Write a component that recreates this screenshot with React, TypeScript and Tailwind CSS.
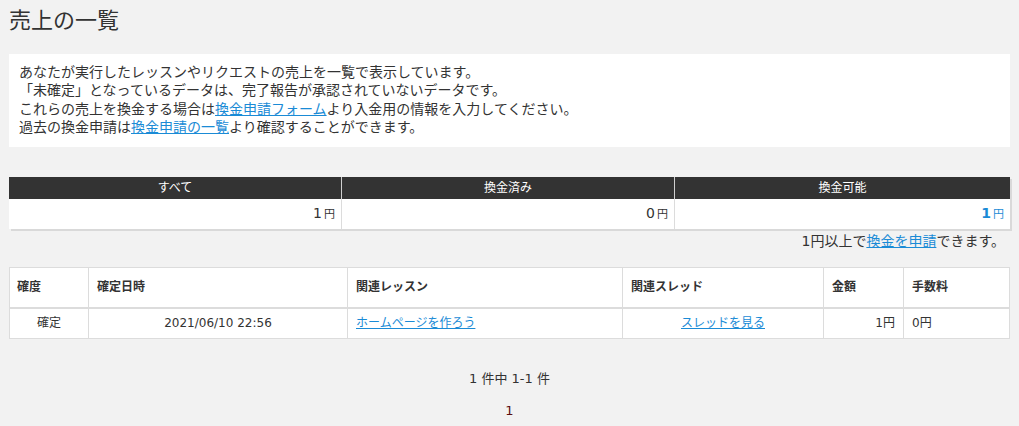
export default function App() {
  const font = { fontFamily: '"DejaVu Sans", "Noto Sans CJK JP", "Noto Sans", sans-serif' };
  return (
    <div className="min-h-[426px] bg-[#f2f2f2] px-[9px] pt-[6px] pb-4 text-[#333]" style={font}>
      <h1 className="text-[22px] leading-[30px] font-normal">売上の一覧</h1>

      {/* Info box */}
      <div className="mt-[18px] bg-white px-[10px] pt-[9px] pb-[11px] text-[14px] leading-[18.3px] text-[#333]">
        <p>あなたが実行したレッスンやリクエストの売上を一覧で表示しています。</p>
        <p>「未確定」となっているデータは、完了報告が承認されていないデータです。</p>
        <p>
          これらの売上を換金する場合は
          <a href="#" className="text-[#1a8bd6] underline">換金申請フォーム</a>
          より入金用の情報を入力してください。
        </p>
        <p>
          過去の換金申請は
          <a href="#" className="text-[#1a8bd6] underline">換金申請の一覧</a>
          より確認することができます。
        </p>
      </div>

      {/* Summary */}
      <div className="mt-[30px] bg-white shadow-[2px_2px_0_#d9d9d9]">
        <div className="grid grid-cols-[332px_333px_1fr] bg-[#333] text-[12px] leading-[22px] text-white">
          <div className="text-center">すべて</div>
          <div className="border-l border-[#cfcfcf] text-center">換金済み</div>
          <div className="border-l border-[#cfcfcf] text-center">換金可能</div>
        </div>
        <div className="grid grid-cols-[332px_333px_1fr] text-[14px] leading-[29px]">
          <div className="pr-[6px] text-right">1<span className="ml-[2px] text-[11px]">円</span></div>
          <div className="border-l border-[#dcdcdc] pr-[6px] text-right">0<span className="ml-[2px] text-[11px]">円</span></div>
          <div className="border-l border-[#dcdcdc] pr-[6px] text-right font-bold text-[#1a8bd6]">1<span className="ml-[2px] text-[11px] font-normal">円</span></div>
        </div>
      </div>
      <p className="mt-[3px] pr-[5px] text-right text-[14px] leading-[18px]">
        1円以上で<a href="#" className="text-[#1a8bd6] underline">換金を申請</a>できます。
      </p>

      {/* Table */}
      <table className="mt-[17px] w-full border-collapse bg-white text-[12px]">
        <thead>
          <tr className="h-[40px] border-b-2 border-[#dcdcdc] text-left font-bold">
            <th className="w-[79px] border border-[#dcdcdc] px-[7px] font-bold">確度</th>
            <th className="w-[259px] border border-[#dcdcdc] px-[8px] font-bold">確定日時</th>
            <th className="w-[275px] border border-[#dcdcdc] px-[8px] font-bold">関連レッスン</th>
            <th className="w-[201px] border border-[#dcdcdc] px-[8px] font-bold">関連スレッド</th>
            <th className="w-[80px] border border-[#dcdcdc] px-[8px] font-bold">金額</th>
            <th className="border border-[#dcdcdc] px-[8px] font-bold">手数料</th>
          </tr>
        </thead>
        <tbody>
          <tr className="h-[31px]">
            <td className="border border-[#dcdcdc] px-[7px] text-center">確定</td>
            <td className="border border-[#dcdcdc] px-[8px] text-center">2021/06/10 22:56</td>
            <td className="border border-[#dcdcdc] px-[8px]">
              <a href="#" className="text-[#1a8bd6] underline">ホームページを作ろう</a>
            </td>
            <td className="border border-[#dcdcdc] px-[8px] text-center">
              <a href="#" className="text-[#1a8bd6] underline">スレッドを見る</a>
            </td>
            <td className="border border-[#dcdcdc] px-[8px] text-right">1円</td>
            <td className="border border-[#dcdcdc] px-[8px]">0円</td>
          </tr>
        </tbody>
      </table>

      {/* Pagination */}
      <p className="mt-[30px] text-center text-[13px] leading-[20px]">1 件中 1-1 件</p>
      <p className="mt-[12px] text-center text-[13px] leading-[20px] text-[#5c1010]">1</p>
    </div>
  );
}
